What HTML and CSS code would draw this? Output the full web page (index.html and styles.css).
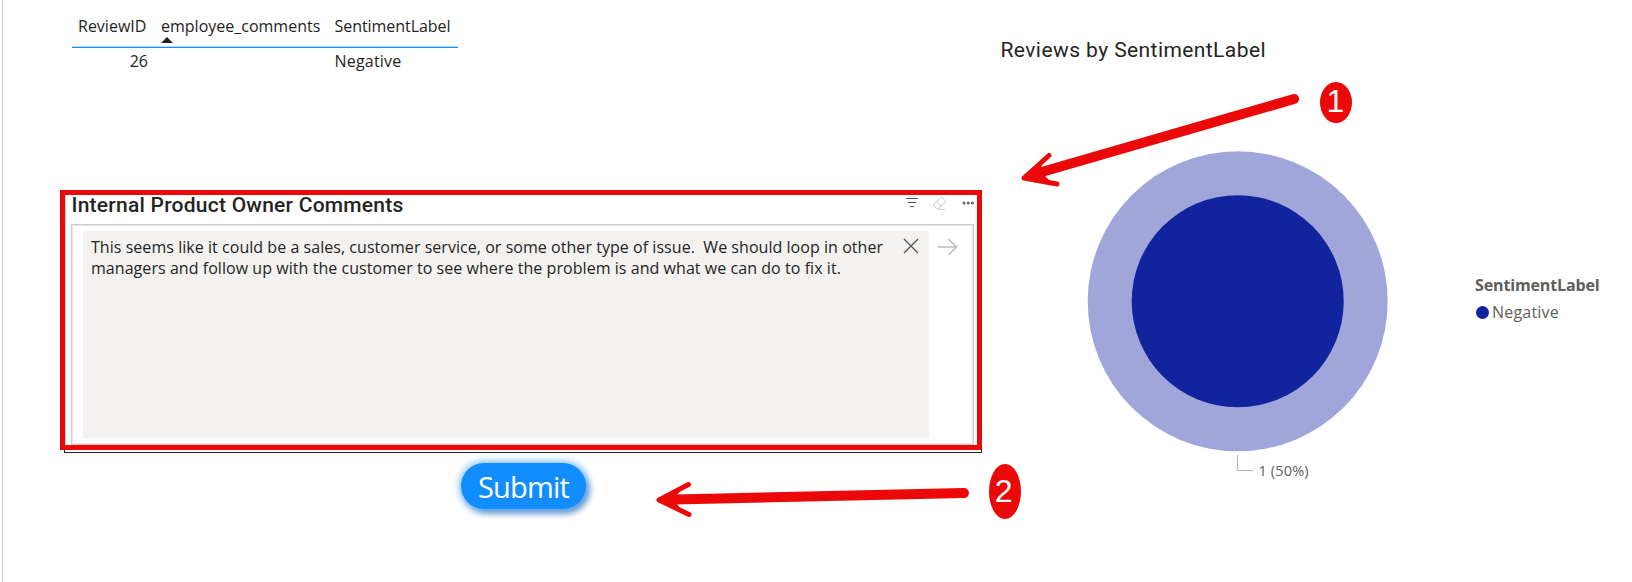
FILE: index.html
```html
<!DOCTYPE html>
<html lang="en">
<head>
<meta charset="utf-8">
<title>Reviews</title>
<link rel="stylesheet" href="styles.css">
</head>
<body>
<main class="report">
  <section class="left">
    <div class="table">
      <div class="cell head c1"><span class="t-id">ReviewID</span></div>
      <div class="cell head c2"><span class="t-emp">employee_comments</span><i class="sort"></i></div>
      <div class="cell head c3"><span class="t-sent">SentimentLabel</span></div>
      <div class="cell num">26</div>
      <div class="cell"></div>
      <div class="cell c3"><span class="t-neg">Negative</span></div>
    </div>
    <div class="card">
      <div class="card-head">
        <h2 class="title t-card">Internal Product Owner Comments</h2>
        <svg class="tools" width="70" height="18" viewBox="0 0 70 18" fill="none">
          <path d="M2 3.5h12M4 7.5h8M6 11.500h4" stroke="#555"/>
          <path d="M30 9l7.500-7 4.500 4.500-7.500 7h-1.800l-2.700-2.700zM32.700 6.500l4.800 4.600M34 14.400h7" stroke="#c8c8c8"/>
          <g fill="#666"><circle cx="60" cy="8" r="1.5"/><circle cx="64.300" cy="8" r="1.5"/><circle cx="68.400" cy="8" r="1.5"/></g>
        </svg>
      </div>
      <div class="input-box">
        <div class="area">
          <p class="text"><span class="l1">This seems like it could be a sales, customer service, or some other type of issue.&nbsp; We should loop in other</span><br><span class="l2">managers and follow up with the customer to see where the problem is and what we can do to fix it.</span></p>
          <svg class="clear" width="16" height="16" viewBox="0 0 16 16"><path d="M1 1l14 14M15 1L1 15" stroke="#555" stroke-width="1.3"/></svg>
        </div>
        <svg class="go" width="22" height="18" viewBox="0 0 22 18" fill="none" stroke="#bdbdbd" stroke-width="1.6"><path d="M1 9h19M11.5 1l8 8-8 8"/></svg>
      </div>
    </div>
    <button class="submit"><span>Submit</span></button>
  </section>
  <section class="right">
    <h2 class="title t-chart">Reviews by SentimentLabel</h2>
    <div class="plot">
      <div class="pie">
        <svg width="302" height="302" viewBox="0 0 302 302"><circle cx="150.700" cy="151.300" r="150" fill="#a0a6d9"/><circle cx="150.700" cy="151.300" r="106" fill="#12239e"/></svg>
        <div class="callout"><svg width="16" height="17" viewBox="0 0 16 17"><path d="M.5 0v15.500H16" fill="none" stroke="#b3b3b3"/></svg><span>1 (50%)</span></div>
      </div>
      <div class="legend">
        <strong>SentimentLabel</strong>
        <div class="item"><i class="dot"></i><span>Negative</span></div>
      </div>
    </div>
  </section>
</main>
<svg class="notes" width="1632" height="582" viewBox="0 0 1632 582">
  <g fill="none" stroke="#ea0808" stroke-linecap="round" stroke-linejoin="round">
    <path d="M1294 99L1040 172.500" stroke-width="10"/>
    <path d="M1049 155.500L1024 178L1057 184" stroke-width="5"/>
    <path d="M964 493L674 499.500" stroke-width="10"/>
    <path d="M688.500 484.500L659 500L689 514.500" stroke-width="5"/>
  </g>
  <g fill="#ea0808">
    <path d="M1024 178L1043 160L1041 168L1046 177L1052 183z"/>
    <path d="M659 500L684 486.500L676 496L676 503L684 513z"/>
    <ellipse cx="1336" cy="102.500" rx="16" ry="20.500"/>
    <ellipse cx="1005" cy="491.500" rx="16" ry="27.500"/>
  </g>
  <g class="digits"><text x="1335.500" y="112">1</text><text x="1003.700" y="502">2</text></g>
</svg>
</body>
</html>
```
FILE: styles.css
```css
* { box-sizing: border-box; }
body { margin: 0; width: 1632px; height: 582px; overflow: hidden; background: #fff; position: relative; font: 16px/21px "Open Sans", "Noto Sans", sans-serif; color: #252423; }
span, strong { white-space: nowrap; }
.report { display: grid; grid-template-columns: 990px 1fr; height: 582px; margin-left: 2px; border-left: 1px solid #c4c4c4; }
.left { padding: 14px 0 0 57px; }
.table { display: grid; grid-template-columns: 83px 174px 129px; margin-left: 12px; height: 176px; grid-template-rows: 34px 28px; }
.cell { padding: 3px 6px; }
.head { border-bottom: 1px solid #118dff; box-shadow: 0 -1px 0 #b9dcfb inset; position: relative; padding-top: 2px; }
.num { text-align: right; padding-right: 7px; }
.c3 { padding-left: 5.500px; }
.t-sent { letter-spacing: -.05px; }
.t-neg { letter-spacing: .2px; }
.sort { position: absolute; left: 6px; top: 23px; border: 6px solid transparent; border-top: 0; border-bottom-color: #252423; }
.title { margin: 0; font: 500 21px/26px Roboto, sans-serif; white-space: nowrap; }
.t-card { margin: -3px 0 0 .5px; letter-spacing: .24px; }
.card { width: 922px; height: 260px; border: 5px solid #ea0808; padding: 0 3px 0 6px; box-shadow: inset 1px 0 0 #ccc; position: relative; }
.card::after { content: ""; position: absolute; left: -1px; right: -5px; bottom: -8px; height: 3px; border: 1px solid #252423; border-top: 0; }
.card-head { display: flex; justify-content: space-between; height: 29px; }
.input-box { display: flex; border: 1px solid #ccc; outline: 1px solid #e6e6e6; outline-offset: -2px; height: 221px; padding: 6px 0 0 11px; width: 903px; }
.area { width: 846px; height: 207px; background: #f3f2f1; display: flex; justify-content: space-between; padding: 6px 10px 0 8px; }
.text { margin: 0; line-height: 21.300px; white-space: nowrap; letter-spacing: .045px; }
.l2 { letter-spacing: .053px; }
.clear { margin-top: 1px; }
.go { margin: 7px 0 0 8px; }
.submit { display: flex; align-items: center; justify-content: center; width: 125px; height: 46px; margin: 13px 0 0 401px; padding: 2px 0 0; border: 0; border-radius: 23px; background: #118dff; color: #fff; font: 29px/40px "Open Sans", sans-serif; letter-spacing: -.8px; box-shadow: 0 0 9px 1px #69b8ff, 3px 4px 6px rgba(10,70,150,.65); }
.right { padding-top: 37px; color: #605e5c; }
.t-chart { margin-left: 7.500px; color: #252423; font-weight: 400; letter-spacing: .42px; }
.plot { display: flex; margin: 87px 0 0 94px; }
.pie { width: 302px; }
.pie svg { display: block; }
.callout { display: flex; margin: 3px 0 0 150px; font-size: 14.500px; }
.callout span { margin: 4.500px 0 0 5.500px; letter-spacing: .15px; }
.legend { margin: 125px 0 0 86px; }
.legend strong { display: block; letter-spacing: -.13px; }
.item { display: flex; align-items: center; margin-top: 6px; letter-spacing: .2px; }
.dot { width: 13px; height: 13px; border-radius: 50%; background: #12239e; margin: 0 3px 0 1px; }
.notes { position: absolute; left: 0; top: 0; }
.digits { font: 32px "Liberation Sans", Arial, sans-serif; fill: #fff; text-anchor: middle; }
```
